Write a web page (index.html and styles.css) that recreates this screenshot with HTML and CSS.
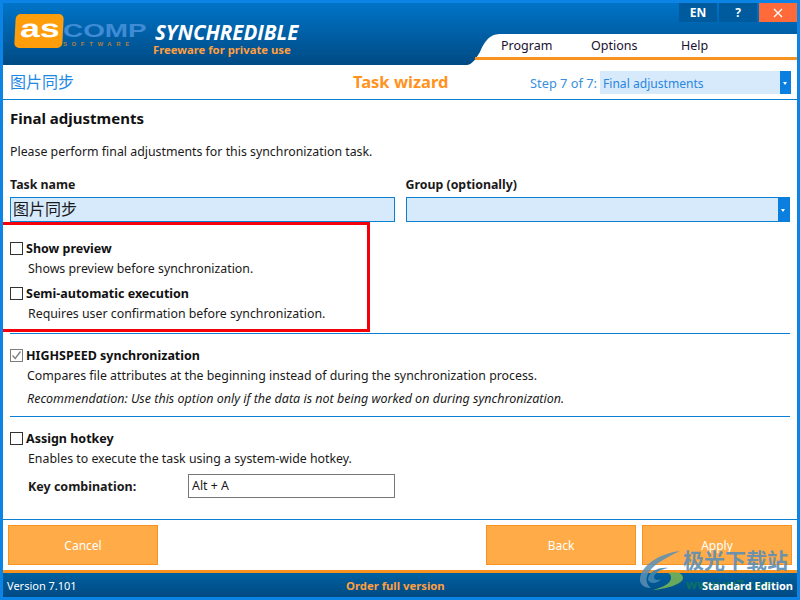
FILE: index.html
```html
<!DOCTYPE html>
<html lang="en">
<head>
    <meta charset="UTF-8">
    <title>Synchredible</title>
    <link rel="stylesheet" href="styles.css">
</head>
<body>
    <div class="window">
        <header class="header">
            <div class="logo">
                <div class="logo-box"><span class="logo-as">as</span></div>
                <div class="logo-rest">
                    <div class="logo-comp"><span>COMP</span></div>
                    <div class="logo-soft">SOFTWARE</div>
                </div>
            </div>
            <div class="brand">
                <div class="brand-name">SYNCHREDIBLE</div>
                <div class="brand-sub">Freeware for private use</div>
            </div>
            <div class="header-right">
                <div class="win-buttons">
                    <div class="win-btn">EN</div>
                    <div class="win-btn">?</div>
                    <div class="win-btn win-close">
                        <svg width="10" height="10" viewBox="0 0 10 10"><path d="M1 1L9 9M9 1L1 9" stroke="#fff" stroke-width="1.3" fill="none"/></svg>
                    </div>
                </div>
                <div class="menu-wrap">
                    <svg class="menu-curve" width="33" height="31" viewBox="0 0 33 31"><path d="M0 31C6 30 9 24 13 18C16 11 21 0 33 0V31Z" fill="#fff"/><path d="M8 24.5H33" stroke="#f7931e" stroke-width="3" fill="none"/></svg>
                    <nav class="menu">
                        <div class="menu-line">
                            <span class="menu-item menu-program">Program</span>
                            <span class="menu-item menu-options">Options</span>
                            <span class="menu-item">Help</span>
                        </div>
                    </nav>
                </div>
            </div>
        </header>

        <div class="titlebar">
            <div class="task-title">图片同步</div>
            <div class="wizard-title">Task wizard</div>
            <div class="step">
                <span class="step-label">Step 7 of 7:</span>
                <div class="select select-step">
                    <span>Final adjustments</span>
                    <span class="select-arrow"></span>
                </div>
            </div>
        </div>

        <main class="content">
            <h1>Final adjustments</h1>
            <p class="intro">Please perform final adjustments for this synchronization task.</p>

            <div class="fields">
                <div class="field">
                    <label class="field-label">Task name</label>
                    <div class="name-input">图片同步</div>
                </div>
                <div class="field field-group">
                    <label class="field-label">Group (optionally)</label>
                    <div class="select select-group"><span class="select-arrow"></span></div>
                </div>
            </div>

            <section class="options options-first">
                <div class="check-row"><span class="checkbox"></span><b>Show preview</b></div>
                <p class="desc">Shows preview before synchronization.</p>
                <div class="check-row check-second"><span class="checkbox"></span><b>Semi-automatic execution</b></div>
                <p class="desc">Requires user confirmation before synchronization.</p>
            </section>

            <section class="options options-speed">
                <div class="check-row">
                    <span class="checkbox checked">
                        <svg width="13" height="13" viewBox="0 0 13 13"><path d="M2.5 6.5L5.2 9.5L10.5 2.5" stroke="#7d7d7d" stroke-width="1.3" fill="none"/></svg>
                    </span>
                    <b>HIGHSPEED synchronization</b>
                </div>
                <p class="desc desc-wide">Compares file attributes at the beginning instead of during the synchronization process.</p>
                <p class="desc desc-wide desc-note">Recommendation: Use this option only if the data is not being worked on during synchronization.</p>
            </section>

            <section class="options options-hotkey">
                <div class="check-row"><span class="checkbox"></span><b>Assign hotkey</b></div>
                <p class="desc">Enables to execute the task using a system-wide hotkey.</p>
                <div class="hotkey-row">
                    <b class="hotkey-label">Key combination:</b>
                    <div class="hotkey-input">Alt + A</div>
                </div>
            </section>
        </main>

        <div class="actions">
            <div class="btn">Cancel</div>
            <div class="actions-right">
                <div class="btn">Back</div>
                <div class="btn">Apply</div>
            </div>
        </div>

        <footer class="footer">
            <span class="version">Version 7.101</span>
            <span class="order">Order full version</span>
            <span class="edition">Standard Edition</span>
        </footer>

        <!-- red box drawn over the screenshot -->
        <div class="annotation"></div>

        <!-- watermark -->
        <div class="watermark">
            <svg class="wm-swirl" width="46" height="46" viewBox="0 0 46 46">
                <path d="M40 1C22 3 3 13 0 28C-1 34 4 38 11 38C6 34 5 28 9 22C15 13 28 7 40 1Z" fill="#5b8fb5" opacity="0.85"/>
                <path d="M8 30C8 22 18 17 28 18C22 19 15 22 14 27C14 30 18 31 21 29C19 33 10 35 8 30Z" fill="#3f86b0" opacity="0.9"/>
                <path d="M13 40C24 37 31 33 31 28C31 25 30 24 28 23C36 21 43 23 43 28C43 34 26 39 13 40Z" fill="#6fae5a" opacity="0.95"/>
            </svg>
            <div class="wm-cn">极光下载站</div>
            <div class="wm-url">www.xz7.com</div>
        </div>
    </div>
</body>
</html>
```

FILE: styles.css
```css
* {
    margin: 0;
    padding: 0;
    box-sizing: border-box;
}

body {
    font-family: "Noto Sans", "Noto Sans CJK SC", sans-serif;
    font-size: 12.35px;
    color: #1a1a1a;
    background: #fff;
    overflow: hidden;
}

.window {
    position: relative;
    width: 800px;
    height: 600px;
    border: 3px solid #0b84e6;
    display: flex;
    flex-direction: column;
    background: #fff;
    overflow: hidden;
}

/* header */
.header {
    height: 62px;
    flex: none;
    display: flex;
    background: linear-gradient(180deg, #0074c8 0%, #004a83 100%);
}

.logo {
    display: flex;
    margin: 11px 0 0 12px;
    height: 34px;
}

.logo-box {
    width: 48px;
    height: 34px;
    background: #ff9d0a;
    border-radius: 5px;
    transform: skewX(-3deg);
    padding: 1px 0 0 5px;
    overflow: hidden;
}

.logo-as {
    display: inline-block;
    color: #fff;
    font: bold 25px/27px "Liberation Sans", sans-serif;
    transform: scaleX(1.43);
    transform-origin: left top;
}

.logo-rest {
    width: 83px;
}

.logo-comp {
    padding-top: 8px;
    height: 26px;
    color: #3f8bd6;
    font: bold 18px/18px "Liberation Sans", sans-serif;
}

.logo-comp span {
    display: inline-block;
    transform: scaleX(1.55);
    transform-origin: left top;
}

.logo-soft {
    color: #b0813a;
    font: bold 6px/8px "Liberation Sans", sans-serif;
    letter-spacing: 4.6px;
    white-space: nowrap;
}

.brand {
    margin: 19px 0 0 9px;
    width: 180px;
}

.brand-name {
    color: #fff;
    font: italic bold 20.5px/20px "Open Sans", sans-serif;
    white-space: nowrap;
}

.brand-sub {
    color: #ff9f3f;
    font: bold 11.3px/15px "Noto Sans", sans-serif;
    margin-left: -2px;
    white-space: nowrap;
}

.header-right {
    margin-left: auto;
    display: flex;
    flex-direction: column;
    align-items: flex-end;
}

.win-buttons {
    display: flex;
    gap: 2px;
    height: 19px;
}

.win-btn {
    width: 38px;
    height: 19px;
    background: #005a9e;
    color: #fff;
    font-size: 12px;
    font-weight: bold;
    text-align: center;
    line-height: 19px;
}

.win-close {
    background: #ff6a3a;
    display: flex;
    align-items: center;
    justify-content: center;
}

.menu-wrap {
    display: flex;
    margin-top: 12px;
}

.menu-curve {
    display: block;
    margin-right: -1px;
}

.menu {
    width: 298px;
    height: 31px;
    background: #fff;
}

.menu-line {
    height: 26px;
    border-bottom: 3px solid #f7931e;
    display: flex;
    padding-left: 2px;
    line-height: 23px;
    color: #1a1030;
}

.menu-item {
    font-size: 12.5px;
}

.menu-program {
    width: 90px;
}

.menu-options {
    width: 90px;
}

/* title row */
.titlebar {
    height: 35px;
    flex: none;
    border-bottom: 1px solid #0b7fd4;
    display: flex;
    align-items: center;
    position: relative;
    padding: 0 3px 0 7px;
}

.task-title {
    color: #1e88e5;
    font-size: 16px;
    margin-top: -2px;
}

.wizard-title {
    color: #ff931e;
    font-size: 16.5px;
    font-weight: bold;
    position: absolute;
    left: 350px;
    top: 5px;
}

.step {
    margin-left: auto;
    display: flex;
    align-items: center;
    gap: 3px;
    margin-right: 3px;
    margin-top: 1px;
}

.step-label {
    color: #3a8fe0;
    font-size: 12.8px;
}

.select {
    background: #d6eafc;
    position: relative;
    display: flex;
    align-items: center;
}

.select-step {
    width: 191px;
    height: 23px;
    padding: 2px 0 0 3px;
    color: #2b86de;
    font-size: 12.1px;
}

.select-arrow {
    position: absolute;
    right: 0;
    top: 0;
    bottom: 0;
    width: 11px;
    background: #0b7fe0;
}

.select-arrow::after {
    content: "";
    position: absolute;
    left: 3px;
    top: 50%;
    margin-top: -1px;
    border: 2.5px solid transparent;
    border-top: 3px solid #fff;
    border-bottom: 0;
}

/* content */
.content {
    flex: 1;
    padding: 0 7px;
}

h1 {
    font-size: 15px;
    font-weight: bold;
    line-height: 20px;
    margin-top: 8px;
    color: #111;
}

.intro {
    line-height: 17px;
    margin-top: 15px;
}

.fields {
    display: flex;
    gap: 11px;
    margin-top: 16px;
}

.field {
    width: 385px;
}

.field-label {
    display: block;
    font-weight: bold;
    line-height: 17px;
    margin-bottom: 4px;
}

.name-input {
    height: 25px;
    background: #d6eafc;
    border: 1px solid #0b7fd4;
    font-size: 16px;
    line-height: 22px;
    padding-left: 2px;
}

.select-group {
    height: 25px;
    border: 1px solid #0b7fd4;
}

.options-first {
    margin-top: 18px;
    height: 94px;
    border-bottom: 1px solid #0b7fd4;
}

.options-speed {
    height: 83px;
    padding-top: 13px;
    border-bottom: 1px solid #0b7fd4;
}

.options-hotkey {
    padding-top: 13px;
}

.check-row {
    display: flex;
    align-items: center;
    height: 17px;
    font-size: 12.5px;
    color: #111;
}

.check-second {
    margin-top: 8px;
}

.checkbox {
    width: 13px;
    height: 13px;
    border: 1px solid #333;
    background: #fff;
    margin-right: 3px;
    flex: none;
    position: relative;
}

.checked {
    border-color: #7d7d7d;
}

.checked svg {
    position: absolute;
    left: -1px;
    top: -1px;
}

.desc {
    line-height: 17px;
    margin: 3px 0 0 18px;
}

.desc-wide {
    margin-left: 17px;
}

.desc-note {
    font-size: 12.5px;
    font-style: italic;
    margin-top: 6px;
}

.hotkey-row {
    display: flex;
    align-items: center;
    margin: 7px 0 0 18px;
}

.hotkey-label {
    width: 160px;
    font-size: 12.5px;
}

.hotkey-input {
    width: 207px;
    height: 24px;
    border: 1px solid #777;
    line-height: 22px;
    padding-left: 3px;
}

/* bottom buttons */
.actions {
    height: 51px;
    flex: none;
    margin-top: auto;
    border-top: 1px solid #0b7fd4;
    display: flex;
    justify-content: space-between;
    padding: 5px 5px 0 5px;
}

.actions-right {
    display: flex;
    gap: 6px;
}

.btn {
    width: 150px;
    height: 40px;
    background: #ffab47;
    border: 1px solid #f7931e;
    color: #fff;
    font-size: 12px;
    text-align: center;
    line-height: 40px;
}

.footer {
    height: 27px;
    flex: none;
    border-top: 3px solid #f7931e;
    background: linear-gradient(180deg, #00609f 0%, #004a83 100%);
    color: #fff;
    position: relative;
    display: flex;
    align-items: center;
    justify-content: space-between;
    padding: 1px 4px 0;
    font-size: 11px;
}

.order {
    position: absolute;
    left: 343px;
    color: #ff9f3f;
    font-weight: bold;
    font-size: 11.3px;
}

.edition {
    position: relative;
    z-index: 1;
    font-weight: bold;
    font-size: 11px;
}

.annotation {
    position: absolute;
    left: -3px;
    top: 219px;
    width: 370px;
    height: 110px;
    border: 3px solid #f5000a;
}

.watermark {
    position: absolute;
    left: 637px;
    top: 547px;
    width: 160px;
    height: 46px;
}

.wm-swirl {
    position: absolute;
    left: 0;
    top: 0;
    overflow: visible;
}

.wm-cn {
    position: absolute;
    left: 43px;
    top: -4px;
    font-size: 21px;
    line-height: 28px;
    font-weight: bold;
    color: #5d8fb8;
    opacity: 0.9;
    white-space: nowrap;
}

.wm-url {
    position: absolute;
    left: 46px;
    top: 26px;
    font-size: 13px;
    line-height: 16px;
    font-weight: bold;
    color: #0f7a5a;
    opacity: 0.8;
    white-space: nowrap;
}
```
